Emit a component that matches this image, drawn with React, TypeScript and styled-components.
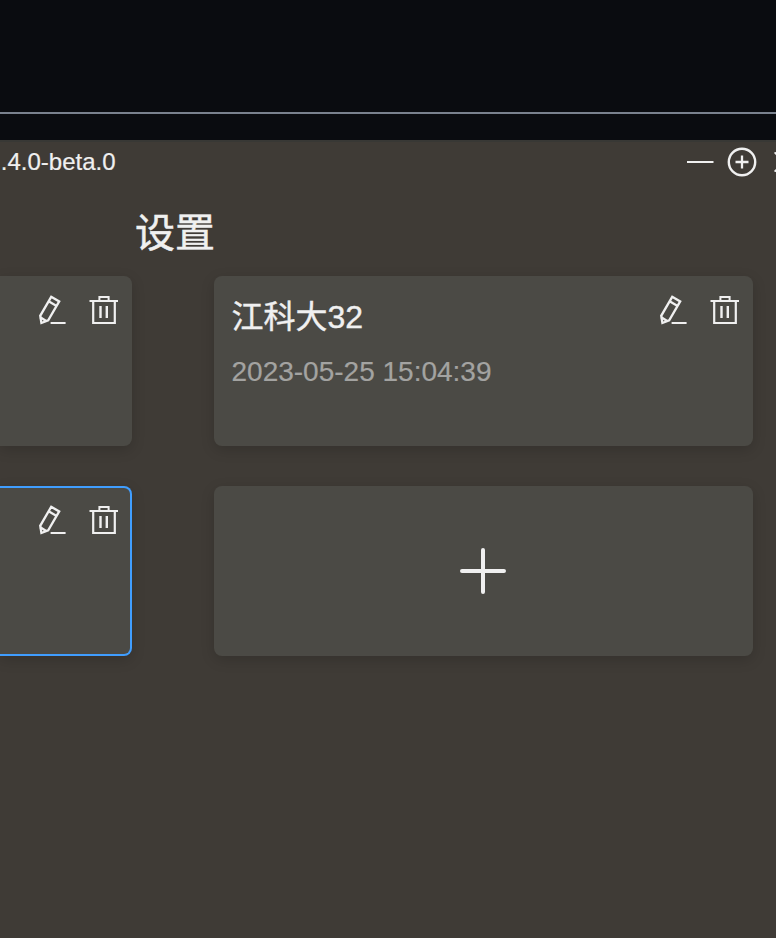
import React from "react";
import styled, { createGlobalStyle } from "styled-components";

const GlobalStyle = createGlobalStyle`
  body {
    margin: 0;
    background: #0a0c10;
    font-family: "Liberation Sans", "Noto Sans CJK SC", sans-serif;
    color: #f0f0f0;
  }
`;

const Screen = styled.div`
  width: 776px;
  height: 938px;
  overflow: hidden;
  display: flex;
  flex-direction: column;
`;

const Backdrop = styled.div`
  flex: none;
  box-sizing: border-box;
  height: 114px;
  margin-bottom: 26px;
  border-bottom: 2px solid #7a828e;
`;

const AppWindow = styled.main`
  flex: 1;
  background: #3f3b36;
  border-top: 2px solid #383835;
`;

const TitleBar = styled.header`
  height: 40px;
  display: flex;
  align-items: center;
  justify-content: space-between;
`;

const Version = styled.span`
  padding-left: 0.8px;
  font-size: 24px;
  line-height: 40px;
  white-space: nowrap;
  -webkit-text-stroke: 0.2px;
`;

const WindowControls = styled.div`
  display: flex;
  flex: none;
  width: 90px;
  height: 40px;
`;

const Heading = styled.h1`
  margin: 21px 0 0 135px;
  height: 73px;
  font-size: 40px;
  line-height: 60px;
  font-weight: 400;
  -webkit-text-stroke: 0.5px;
`;

const CardGrid = styled.section`
  display: grid;
  grid-template-columns: 132px 539px;
  grid-auto-rows: 170px;
  gap: 40px 82px;
`;

const Card = styled.article<{ $selected?: boolean; $clipped?: boolean; $centered?: boolean }>`
  box-sizing: border-box;
  display: flex;
  justify-content: ${(p) => (p.$centered ? "center" : p.$clipped ? "flex-end" : "space-between")};
  align-items: ${(p) => (p.$centered ? "center" : "flex-start")};
  border: 2px solid ${(p) => (p.$selected ? "#409eff" : "transparent")};
  ${(p) => p.$clipped && "border-left: 0;"}
  border-radius: ${(p) => (p.$clipped ? "0 8px 8px 0" : "8px")};
  background: #4b4a45;
  box-shadow: 0 4px 14px rgba(0, 0, 0, 0.16);
`;

const CardText = styled.div`
  padding: 15px 0 0 15.5px;
`;

const CardTitle = styled.h2`
  margin: 0;
  font-size: 32px;
  line-height: 48px;
  font-weight: 400;
  -webkit-text-stroke: 0.4px;
`;

const CardDate = styled.time`
  display: block;
  margin-top: 11px;
  font-size: 28px;
  line-height: 40px;
  color: #a3a3a1;
  -webkit-text-stroke: 0.2px;
`;

const CardActions = styled.div`
  display: flex;
  gap: 20px;
  padding: 16px 10px 0 0;
`;

const Glyph = styled.svg`
  display: block;
  fill: none;
  stroke: #f0f0f0;
`;

const PlusGlyph = styled(Glyph)`
  margin-right: 1px;
`;

const EditIcon = () => (
  <Glyph width="32" height="32" viewBox="0 0 32 32" strokeWidth="2.3">
    <path d="M15.2 2.8 23.2 7.4 12.2 26.4 5.4 29 4.2 21.8z" />
    <path d="M12.6 7.3 20.6 11.9M4.2 23.2 10.2 26.9" />
    <path d="M14.6 29h15" strokeWidth="2" />
  </Glyph>
);

const TrashIcon = () => (
  <Glyph width="32" height="32" viewBox="0 0 32 32" strokeWidth="2.2">
    <path d="M1.5 7h28.5M11.4 7V3h9.2v4" strokeWidth="2" />
    <path d="M5.2 7v22h21.6V7" />
    <path d="M12.5 12v12M18.8 12v12" strokeWidth="2.4" />
  </Glyph>
);

const Actions = () => (
  <CardActions>
    <EditIcon />
    <TrashIcon />
  </CardActions>
);

export default function App() {
  return (
    <Screen>
      <GlobalStyle />
      <Backdrop />
      <AppWindow>
        <TitleBar>
          <Version>.4.0-beta.0</Version>
          <WindowControls>
            <Glyph width="90" height="40" viewBox="0 0 90 40" strokeWidth="2">
              <path d="M1 20h26.5" />
              <circle cx="56" cy="20" r="13.2" strokeWidth="2.4" />
              <path d="M49.5 20h13M56 13.5v13" strokeWidth="2.3" />
              <path d="m89.3 11 18 18m0-18-18 18" strokeLinecap="round" />
            </Glyph>
          </WindowControls>
        </TitleBar>
        <Heading>设置</Heading>
        <CardGrid>
          <Card $clipped>
            <Actions />
          </Card>
          <Card>
            <CardText>
              <CardTitle>江科大32</CardTitle>
              <CardDate>2023-05-25 15:04:39</CardDate>
            </CardText>
            <Actions />
          </Card>
          <Card $clipped $selected>
            <Actions />
          </Card>
          <Card $centered>
            <PlusGlyph width="48" height="48" viewBox="0 0 48 48" strokeWidth="4" strokeLinecap="round">
              <path d="M3 24h42M24 3v42" />
            </PlusGlyph>
          </Card>
        </CardGrid>
      </AppWindow>
    </Screen>
  );
}
